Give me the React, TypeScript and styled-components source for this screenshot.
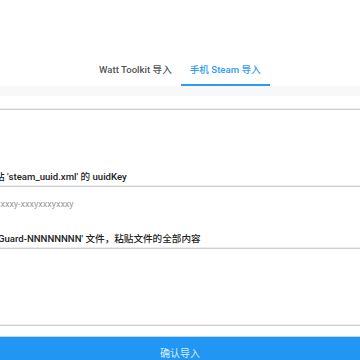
import React, { useState } from 'react';
import styled, { createGlobalStyle } from 'styled-components';

const GlobalStyle = createGlobalStyle`
    html, body {
        margin:0;
        padding:0;
        background:#fff;
        overflow:hidden;
    }
    body{
        font-family: Roboto, "Noto Sans CJK SC", "Liberation Sans", sans-serif;
        -webkit-font-smoothing: antialiased;
    }
`;

const Page = styled.div`
    width:360px;
    height:360px;
    display:flex;
    flex-direction:column;
    overflow:hidden;
    & > *{
        flex-shrink:0;
    }
`;

const TabBar = styled.div`
    height:86px;
    display:flex;
    align-items:flex-end;
    padding-left:90px;
    box-sizing:border-box;
`;

const Tab = styled.div<{ active?: boolean }>`
    height:30px;
    display:flex;
    align-items:center;
    padding:0 9px 2px;
    font-size:9.6px;
    font-weight:500;
    color:${p => p.active ? '#2f9bf0' : '#555'};
    border-bottom:2px solid ${p => p.active ? '#2f9bf0' : 'transparent'};
    box-sizing:border-box;
    cursor:pointer;
    white-space:nowrap;
`;

const Band = styled.div`
    height:10px;
    background:#f8f8f8;
`;

const Form = styled.div`
    display:flex;
    flex-direction:column;
    padding-top:13px;
    & > *{
        flex-shrink:0;
    }
`;

const Field = styled.div<{ h: number }>`
    height:${p => p.h}px;
    border-top:1px solid #cfcfcf;
    box-shadow:0 -1px 0 #ececec;
    display:flex;
    align-items:center;
    overflow:hidden;
    box-sizing:border-box;
`;

const Label = styled.div<{ top: number }>`
    padding-top:${p => p.top}px;
    padding-bottom:2px;
    font-size:9.6px;
    line-height:14px;
    font-weight:500;
    color:#222;
    white-space:nowrap;
    overflow:hidden;
`;

const Cut = styled.span<{ shift: number }>`
    display:inline-block;
    margin-left:${p => p.shift}px;
`;

const Placeholder = styled.span`
    font-size:9px;
    color:#9a9a9a;
    margin-left:-4px;
    white-space:nowrap;
`;

const Bottom = styled.div`
    border-top:1px solid #cfcfcf;
    box-shadow:0 -1px 0 #ececec;
    padding-top:10px;
`;

const Button = styled.button`
    width:100%;
    height:34px;
    border:none;
    border-top:1px solid #b8dcf8;
    background:#2196f3;
    color:rgba(255,255,255,0.85);
    font-family:inherit;
    font-size:10px;
    padding:0 0 2px;
    cursor:pointer;
`;

function App() {
    const [tab, setTab] = useState(1);

    return (
        <Page>
            <GlobalStyle />
            <TabBar>
                <Tab active={tab === 0} onClick={() => setTab(0)}>Watt Toolkit 导入</Tab>
                <Tab active={tab === 1} onClick={() => setTab(1)}>手机 Steam 导入</Tab>
            </TabBar>
            <Band />
            <Form>
                <Field h={35} />
                <Label top={26}>
                    <Cut shift={-5}>站 'steam_uuid.xml' 的 uuidKey</Cut>
                </Label>
                <Field h={34}>
                    <Placeholder>xxxxy-xxxyxxxyxxxy</Placeholder>
                </Field>
                <Label top={12}>
                    <Cut shift={-2}>Guard-NNNNNNNN' 文件，粘贴文件的全部内容</Cut>
                </Label>
                <Field h={77} />
                <Bottom>
                    <Button>确认导入</Button>
                </Bottom>
            </Form>
        </Page>
    );
}

export default App;
